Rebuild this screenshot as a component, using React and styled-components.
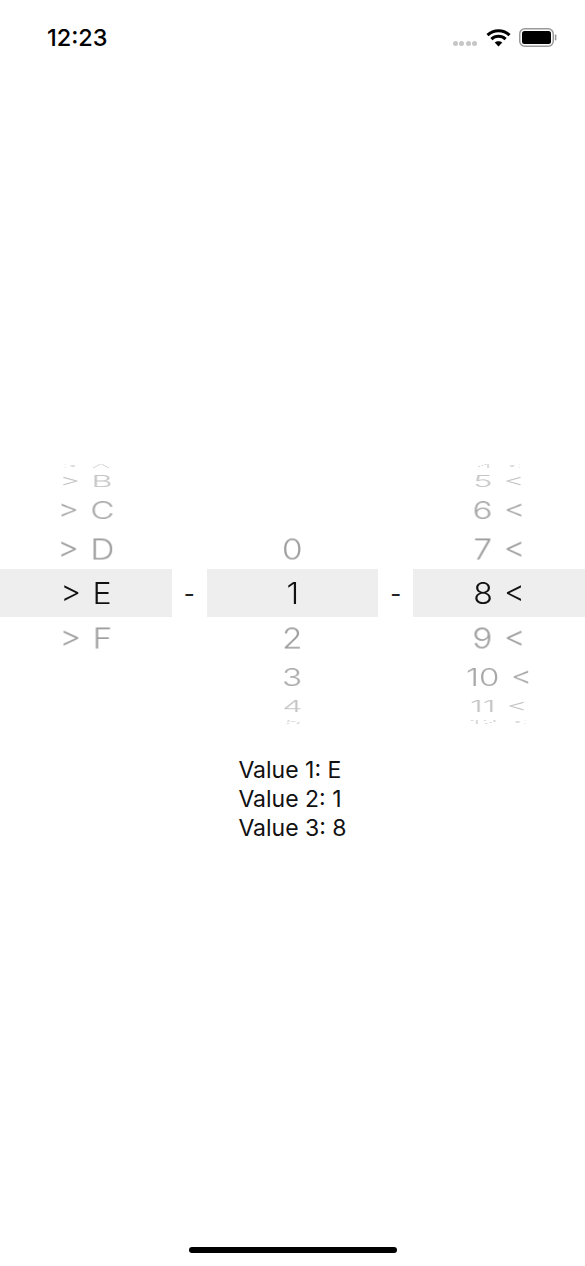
import React from 'react';
import styled, { createGlobalStyle } from 'styled-components';

const GlobalStyle = createGlobalStyle`
    html, body {
        margin: 0;
        padding: 0;
        background: #fff;
    }
    body {
        font-family: Inter, "Liberation Sans", sans-serif;
        color: #111;
    }
`;

const Screen = styled.div`
    width: 585px;
    height: 1266px;
    display: flex;
    flex-direction: column;
    overflow: hidden;
    background: #fff;
`;

const StatusBar = styled.div`
    height: 60px;
    flex: none;
    display: flex;
    align-items: flex-start;
    justify-content: space-between;
    padding: 24px 28px 0 47px;
    box-sizing: border-box;
`;

const Clock = styled.div`
    font-size: 23.5px;
    line-height: 28px;
    font-weight: 500;
    color: #000;
`;

const StatusIcons = styled.div`
    display: flex;
    align-items: flex-start;
    padding-top: 4px;
`;

const SignalDots = styled.div`
    display: flex;
    gap: 1.4px;
    margin: 13px 9px 0 0;
`;

const Dot = styled.span`
    width: 5px;
    height: 5px;
    border-radius: 50%;
    background: #c6c6c6;
`;

const Picker = styled.div`
    display: flex;
    margin-top: 400px;
`;

const Wheel = styled.div`
    flex: 1;
    height: 265px;
    overflow: hidden;
    display: flex;
    flex-direction: column;
`;

const Slot = styled.div`
    flex: none;
    height: ${(p) => p.$height}px;
    background: ${(p) => (p.$selected ? '#eeeeee' : 'transparent')};
    display: flex;
    align-items: center;
    justify-content: center;
`;

const SlotText = styled.span`
    font-size: 30px;
    line-height: 36px;
    font-weight: 350;
    word-spacing: 2px;
    white-space: pre;
    color: ${(p) => p.$color};
    transform: scale(${(p) => p.$scaleX}, ${(p) => p.$scaleY});
    will-change: transform;
`;

const Separator = styled.div`
    flex: none;
    width: 35px;
    height: 265px;
    display: flex;
    align-items: center;
    justify-content: center;
    font-size: 24px;
    line-height: 30px;
    color: #222;
    padding-top: 3px;
    box-sizing: border-box;
`;

const Values = styled.div`
    align-self: center;
    margin-top: 31px;
    font-size: 23px;
    line-height: 29px;
    color: #111;
`;

const HomeBar = styled.div`
    margin: auto auto 13px;
    width: 208px;
    height: 6px;
    border-radius: 3px;
    background: #000;
`;

// wheel geometry, one entry per visible row
const slots = [
    { height: 11, scaleX: 1, scaleY: 0.2, color: '#dcdcdc' },
    { height: 19, scaleX: 1.07, scaleY: 0.55, color: '#c4c4c4' },
    { height: 39, scaleX: 1.1, scaleY: 0.82, color: '#a8a8a8' },
    { height: 40, scaleX: 1.11, scaleY: 0.96, color: '#a0a0a0' },
    { height: 48, scaleX: 1.07, scaleY: 1, color: '#111111', selected: true },
    { height: 41, scaleX: 1.11, scaleY: 0.96, color: '#a0a0a0' },
    { height: 38, scaleX: 1.1, scaleY: 0.82, color: '#a8a8a8' },
    { height: 20, scaleX: 1.07, scaleY: 0.55, color: '#c4c4c4' },
    { height: 11, scaleX: 1, scaleY: 0.2, color: '#dcdcdc' },
];

const first = ['> A', '> B', '> C', '> D', '> E', '> F', '', '', ''];
const second = ['', '', '', '0', '1', '2', '3', '4', '5'];
const third = ['4 <', '5 <', '6 <', '7 <', '8 <', '9 <', '10 <', '11 <', '12 <'];

const WheelColumn = ({ items }) => (
    <Wheel>
        {slots.map((slot, i) => (
            <Slot key={i} $height={slot.height} $selected={slot.selected}>
                {items[i] && (
                    <SlotText $color={slot.color} $scaleX={slot.scaleX} $scaleY={slot.scaleY}>
                        {items[i]}
                    </SlotText>
                )}
            </Slot>
        ))}
    </Wheel>
);

const WifiIcon = () => (
    <svg width="25" height="19" viewBox="0 0 25 19" fill="none" stroke="#000" strokeWidth="3">
        <path d="M1.5 7.2C7.6 1.4 17.4 1.4 23.5 7.2" />
        <path d="M5.4 11.2C9.4 7.4 15.6 7.4 19.6 11.2" />
        <path d="M12.5 18.5L8.7 14.6C10.8 12.7 14.2 12.7 16.3 14.6Z" fill="#000" stroke="none" />
    </svg>
);

const BatteryIcon = () => (
    <svg width="38" height="19" viewBox="0 0 38 19" fill="none" style={{ marginLeft: 8 }}>
        <rect x="0.75" y="0.75" width="33.5" height="17.5" rx="5" stroke="#9a9a9a" strokeWidth="1.5" />
        <rect x="3" y="3" width="29" height="13" rx="2.5" fill="#000" />
        <rect x="35.8" y="6.5" width="1.6" height="6" rx="0.8" fill="#9a9a9a" />
    </svg>
);

const App = () => (
    <Screen>
        <GlobalStyle />
        <StatusBar>
            <Clock>12:23</Clock>
            <StatusIcons>
                <SignalDots>
                    <Dot />
                    <Dot />
                    <Dot />
                    <Dot />
                </SignalDots>
                <WifiIcon />
                <BatteryIcon />
            </StatusIcons>
        </StatusBar>
        <Picker>
            <WheelColumn items={first} />
            <Separator>-</Separator>
            <WheelColumn items={second} />
            <Separator>-</Separator>
            <WheelColumn items={third} />
        </Picker>
        <Values>
            <div>Value 1: E</div>
            <div>Value 2: 1</div>
            <div>Value 3: 8</div>
        </Values>
        <HomeBar />
    </Screen>
);

export default App;
